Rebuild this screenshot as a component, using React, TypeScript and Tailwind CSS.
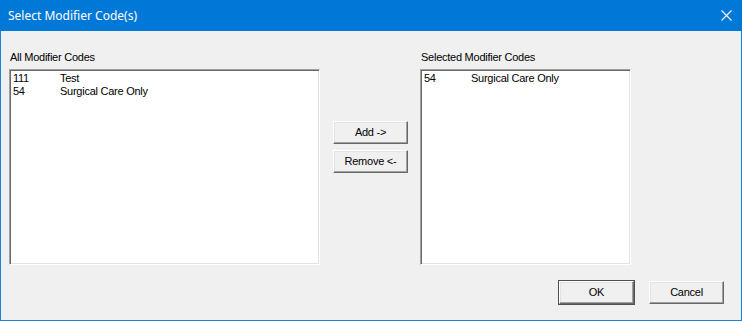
import React from 'react'

type Row = { code: string; desc: string }

const allCodes: Row[] = [
  { code: '111', desc: 'Test' },
  { code: '54', desc: 'Surgical Care Only' },
]

const selectedCodes: Row[] = [{ code: '54', desc: 'Surgical Care Only' }]

const ListBox: React.FC<{ rows: Row[]; width: string }> = ({ rows, width }) => (
  <div
    className={`${width} h-[196px] bg-white border border-t-[#a0a0a0] border-l-[#a0a0a0] border-b-white border-r-white shadow-[inset_1px_1px_0_#696969,inset_-1px_-1px_0_#e3e3e3] pl-[3px] pt-[2px]`}
  >
    {rows.map((r) => (
      <div key={r.code} className="flex h-[13px] leading-[13px] text-[11px] tracking-[-0.25px] text-black">
        <span className="w-[47px]">{r.code}</span>
        <span>{r.desc}</span>
      </div>
    ))}
  </div>
)

const Button: React.FC<{ label: string; isDefault?: boolean }> = ({ label, isDefault }) => (
  <button
    className={`w-[75px] h-[23px] bg-[#f0f0f0] text-[11px] tracking-[-0.25px] text-black border border-t-white border-l-white border-b-[#696969] border-r-[#696969] shadow-[inset_-1px_-1px_0_#a0a0a0,inset_1px_1px_0_#e3e3e3] ${
      isDefault ? 'outline outline-1 outline-[#505050]' : ''
    }`}
  >
    {label}
  </button>
)

export default function App() {
  return (
    <div
      className="w-[742px] h-[321px] flex flex-col bg-[#f0f0f0] border border-[#1883d7] border-t-0"
      style={{ fontFamily: '"Liberation Sans", Arial, sans-serif' }}
    >
      <div className="h-[31px] bg-[#0078d7] flex items-center justify-between pl-[8px] pr-[9px] -mx-px">
        <span className="text-white text-[12px]" style={{ fontFamily: '"Noto Sans", "Open Sans", sans-serif' }}>
          Select Modifier Code(s)
        </span>
        <svg width="11" height="11" viewBox="0 0 11 11" className="mr-[1px]">
          <path d="M0.5 0.5 L10.5 10.5 M10.5 0.5 L0.5 10.5" stroke="white" strokeWidth="1.1" fill="none" />
        </svg>
      </div>

      <div className="flex items-start pl-[8px] pt-[20px]">
        <div className="flex flex-col">
          <div className="text-[11px] leading-[13px] tracking-[-0.25px] text-black mb-[5px] pl-[1px]">All Modifier Codes</div>
          <ListBox rows={allCodes} width="w-[311px]" />
        </div>

        <div className="flex flex-col gap-[6px] ml-[13px] mr-[12px] mt-[70px]">
          <Button label="Add ->" />
          <Button label="Remove <-" />
        </div>

        <div className="flex flex-col">
          <div className="text-[11px] leading-[13px] tracking-[-0.25px] text-black mb-[5px] pl-[1px]">Selected Modifier Codes</div>
          <ListBox rows={selectedCodes} width="w-[211px]" />
        </div>
      </div>

      <div className="flex justify-end gap-[15px] pr-[17px] mt-[16px]">
        <Button label="OK" isDefault />
        <Button label="Cancel" />
      </div>
    </div>
  )
}
